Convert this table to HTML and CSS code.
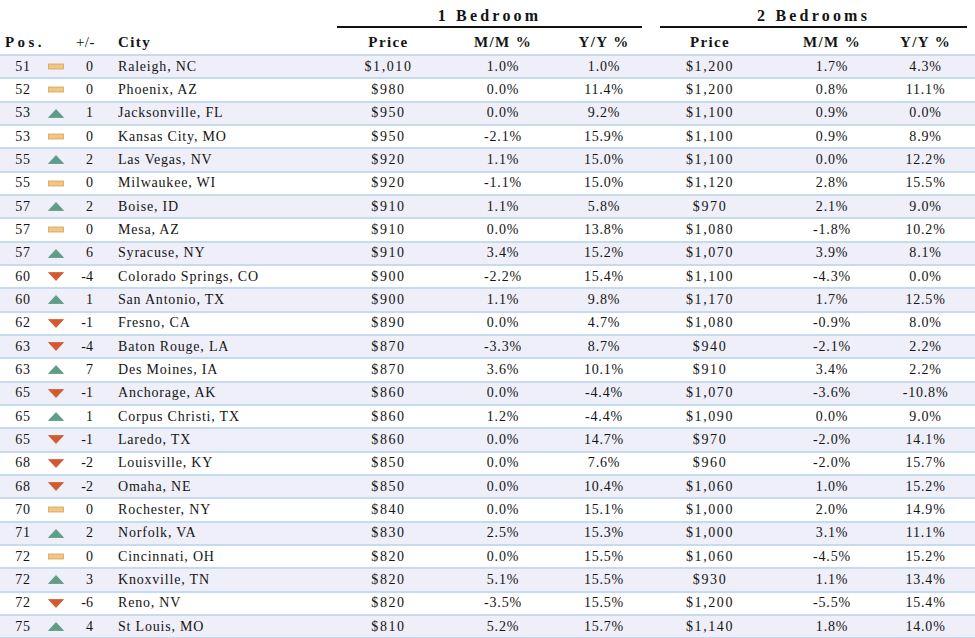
FILE: index.html
```html
<!DOCTYPE html>
<html>
<head>
<meta charset="utf-8">
<title>Rent ranking</title>
<link rel="stylesheet" href="styles.css">
</head>
<body>
<svg class="defs" width="0" height="0">
  <symbol id="up" viewBox="0 0 16 9"><polygon points="0.5,8.5 8,0.5 15.5,8.5" fill="#5c9e88" stroke="#4b8a74" stroke-width="0.6"/></symbol>
  <symbol id="down" viewBox="0 0 16 9"><polygon points="0.5,0.5 15.5,0.5 8,8.5" fill="#d6582f" stroke="#c04a25" stroke-width="0.6"/></symbol>
  <symbol id="flat" viewBox="0 0 16 9"><rect x="0.5" y="2" width="15" height="5" fill="#f1c582" stroke="#d7a35e" stroke-width="0.8"/></symbol>
</svg>
<table class="rank">
  <colgroup>
    <col class="c-pos"><col class="c-ic"><col class="c-chg"><col class="c-city">
    <col class="c-p1"><col class="c-m1"><col class="c-y1"><col class="c-gap">
    <col class="c-p2"><col class="c-m2"><col class="c-y2">
  </colgroup>
  <thead>
    <tr class="group">
      <th colspan="4"></th>
      <th colspan="3"><div class="gtitle">1 Bedroom</div></th>
      <th></th>
      <th colspan="3"><div class="gtitle g2">2 Bedrooms</div></th>
    </tr>
    <tr class="cols">
      <th class="pos">Pos.</th>
      <th></th>
      <th class="chg">+/-</th>
      <th class="city">City</th>
      <th class="num">Price</th>
      <th class="num">M/M %</th>
      <th class="num">Y/Y %</th>
      <th></th>
      <th class="num">Price</th>
      <th class="num m2">M/M %</th>
      <th class="num y2">Y/Y %</th>
    </tr>
  </thead>
  <tbody>
    <tr><td class="pos">51</td><td class="ic"><svg><use href="#flat"/></svg></td><td class="chg">0</td><td class="city">Raleigh, NC</td><td class="num pr">$1,010</td><td class="num">1.0%</td><td class="num">1.0%</td><td></td><td class="num pr">$1,200</td><td class="num m2">1.7%</td><td class="num y2">4.3%</td></tr>
    <tr><td class="pos">52</td><td class="ic"><svg><use href="#flat"/></svg></td><td class="chg">0</td><td class="city">Phoenix, AZ</td><td class="num pr">$980</td><td class="num">0.0%</td><td class="num">11.4%</td><td></td><td class="num pr">$1,200</td><td class="num m2">0.8%</td><td class="num y2">11.1%</td></tr>
    <tr><td class="pos">53</td><td class="ic"><svg><use href="#up"/></svg></td><td class="chg">1</td><td class="city">Jacksonville, FL</td><td class="num pr">$950</td><td class="num">0.0%</td><td class="num">9.2%</td><td></td><td class="num pr">$1,100</td><td class="num m2">0.9%</td><td class="num y2">0.0%</td></tr>
    <tr><td class="pos">53</td><td class="ic"><svg><use href="#flat"/></svg></td><td class="chg">0</td><td class="city">Kansas City, MO</td><td class="num pr">$950</td><td class="num">-2.1%</td><td class="num">15.9%</td><td></td><td class="num pr">$1,100</td><td class="num m2">0.9%</td><td class="num y2">8.9%</td></tr>
    <tr><td class="pos">55</td><td class="ic"><svg><use href="#up"/></svg></td><td class="chg">2</td><td class="city">Las Vegas, NV</td><td class="num pr">$920</td><td class="num">1.1%</td><td class="num">15.0%</td><td></td><td class="num pr">$1,100</td><td class="num m2">0.0%</td><td class="num y2">12.2%</td></tr>
    <tr><td class="pos">55</td><td class="ic"><svg><use href="#flat"/></svg></td><td class="chg">0</td><td class="city">Milwaukee, WI</td><td class="num pr">$920</td><td class="num">-1.1%</td><td class="num">15.0%</td><td></td><td class="num pr">$1,120</td><td class="num m2">2.8%</td><td class="num y2">15.5%</td></tr>
    <tr><td class="pos">57</td><td class="ic"><svg><use href="#up"/></svg></td><td class="chg">2</td><td class="city">Boise, ID</td><td class="num pr">$910</td><td class="num">1.1%</td><td class="num">5.8%</td><td></td><td class="num pr">$970</td><td class="num m2">2.1%</td><td class="num y2">9.0%</td></tr>
    <tr><td class="pos">57</td><td class="ic"><svg><use href="#flat"/></svg></td><td class="chg">0</td><td class="city">Mesa, AZ</td><td class="num pr">$910</td><td class="num">0.0%</td><td class="num">13.8%</td><td></td><td class="num pr">$1,080</td><td class="num m2">-1.8%</td><td class="num y2">10.2%</td></tr>
    <tr><td class="pos">57</td><td class="ic"><svg><use href="#up"/></svg></td><td class="chg">6</td><td class="city">Syracuse, NY</td><td class="num pr">$910</td><td class="num">3.4%</td><td class="num">15.2%</td><td></td><td class="num pr">$1,070</td><td class="num m2">3.9%</td><td class="num y2">8.1%</td></tr>
    <tr><td class="pos">60</td><td class="ic"><svg><use href="#down"/></svg></td><td class="chg">-4</td><td class="city">Colorado Springs, CO</td><td class="num pr">$900</td><td class="num">-2.2%</td><td class="num">15.4%</td><td></td><td class="num pr">$1,100</td><td class="num m2">-4.3%</td><td class="num y2">0.0%</td></tr>
    <tr><td class="pos">60</td><td class="ic"><svg><use href="#up"/></svg></td><td class="chg">1</td><td class="city">San Antonio, TX</td><td class="num pr">$900</td><td class="num">1.1%</td><td class="num">9.8%</td><td></td><td class="num pr">$1,170</td><td class="num m2">1.7%</td><td class="num y2">12.5%</td></tr>
    <tr><td class="pos">62</td><td class="ic"><svg><use href="#down"/></svg></td><td class="chg">-1</td><td class="city">Fresno, CA</td><td class="num pr">$890</td><td class="num">0.0%</td><td class="num">4.7%</td><td></td><td class="num pr">$1,080</td><td class="num m2">-0.9%</td><td class="num y2">8.0%</td></tr>
    <tr><td class="pos">63</td><td class="ic"><svg><use href="#down"/></svg></td><td class="chg">-4</td><td class="city">Baton Rouge, LA</td><td class="num pr">$870</td><td class="num">-3.3%</td><td class="num">8.7%</td><td></td><td class="num pr">$940</td><td class="num m2">-2.1%</td><td class="num y2">2.2%</td></tr>
    <tr><td class="pos">63</td><td class="ic"><svg><use href="#up"/></svg></td><td class="chg">7</td><td class="city">Des Moines, IA</td><td class="num pr">$870</td><td class="num">3.6%</td><td class="num">10.1%</td><td></td><td class="num pr">$910</td><td class="num m2">3.4%</td><td class="num y2">2.2%</td></tr>
    <tr><td class="pos">65</td><td class="ic"><svg><use href="#down"/></svg></td><td class="chg">-1</td><td class="city">Anchorage, AK</td><td class="num pr">$860</td><td class="num">0.0%</td><td class="num">-4.4%</td><td></td><td class="num pr">$1,070</td><td class="num m2">-3.6%</td><td class="num y2">-10.8%</td></tr>
    <tr><td class="pos">65</td><td class="ic"><svg><use href="#up"/></svg></td><td class="chg">1</td><td class="city">Corpus Christi, TX</td><td class="num pr">$860</td><td class="num">1.2%</td><td class="num">-4.4%</td><td></td><td class="num pr">$1,090</td><td class="num m2">0.0%</td><td class="num y2">9.0%</td></tr>
    <tr><td class="pos">65</td><td class="ic"><svg><use href="#down"/></svg></td><td class="chg">-1</td><td class="city">Laredo, TX</td><td class="num pr">$860</td><td class="num">0.0%</td><td class="num">14.7%</td><td></td><td class="num pr">$970</td><td class="num m2">-2.0%</td><td class="num y2">14.1%</td></tr>
    <tr><td class="pos">68</td><td class="ic"><svg><use href="#down"/></svg></td><td class="chg">-2</td><td class="city">Louisville, KY</td><td class="num pr">$850</td><td class="num">0.0%</td><td class="num">7.6%</td><td></td><td class="num pr">$960</td><td class="num m2">-2.0%</td><td class="num y2">15.7%</td></tr>
    <tr><td class="pos">68</td><td class="ic"><svg><use href="#down"/></svg></td><td class="chg">-2</td><td class="city">Omaha, NE</td><td class="num pr">$850</td><td class="num">0.0%</td><td class="num">10.4%</td><td></td><td class="num pr">$1,060</td><td class="num m2">1.0%</td><td class="num y2">15.2%</td></tr>
    <tr><td class="pos">70</td><td class="ic"><svg><use href="#flat"/></svg></td><td class="chg">0</td><td class="city">Rochester, NY</td><td class="num pr">$840</td><td class="num">0.0%</td><td class="num">15.1%</td><td></td><td class="num pr">$1,000</td><td class="num m2">2.0%</td><td class="num y2">14.9%</td></tr>
    <tr><td class="pos">71</td><td class="ic"><svg><use href="#up"/></svg></td><td class="chg">2</td><td class="city">Norfolk, VA</td><td class="num pr">$830</td><td class="num">2.5%</td><td class="num">15.3%</td><td></td><td class="num pr">$1,000</td><td class="num m2">3.1%</td><td class="num y2">11.1%</td></tr>
    <tr><td class="pos">72</td><td class="ic"><svg><use href="#flat"/></svg></td><td class="chg">0</td><td class="city">Cincinnati, OH</td><td class="num pr">$820</td><td class="num">0.0%</td><td class="num">15.5%</td><td></td><td class="num pr">$1,060</td><td class="num m2">-4.5%</td><td class="num y2">15.2%</td></tr>
    <tr><td class="pos">72</td><td class="ic"><svg><use href="#up"/></svg></td><td class="chg">3</td><td class="city">Knoxville, TN</td><td class="num pr">$820</td><td class="num">5.1%</td><td class="num">15.5%</td><td></td><td class="num pr">$930</td><td class="num m2">1.1%</td><td class="num y2">13.4%</td></tr>
    <tr><td class="pos">72</td><td class="ic"><svg><use href="#down"/></svg></td><td class="chg">-6</td><td class="city">Reno, NV</td><td class="num pr">$820</td><td class="num">-3.5%</td><td class="num">15.5%</td><td></td><td class="num pr">$1,200</td><td class="num m2">-5.5%</td><td class="num y2">15.4%</td></tr>
    <tr><td class="pos">75</td><td class="ic"><svg><use href="#up"/></svg></td><td class="chg">4</td><td class="city">St Louis, MO</td><td class="num pr">$810</td><td class="num">5.2%</td><td class="num">15.7%</td><td></td><td class="num pr">$1,140</td><td class="num m2">1.8%</td><td class="num y2">14.0%</td></tr>
  </tbody>
</table>
</body>
</html>
```
FILE: styles.css
```css
body{margin:0;padding:0;background:#fff;font-family:"Liberation Serif","Times New Roman",serif;color:#141414;}
.defs{position:absolute;width:0;height:0;overflow:hidden;}

.rank{width:975px;table-layout:fixed;border-collapse:separate;border-spacing:0;font-size:14px;letter-spacing:0.8px;}
.rank th,.rank td{padding:0;white-space:nowrap;}

.c-pos{width:46px;}
.c-ic{width:20px;}
.c-chg{width:34px;}
.c-city{width:237px;}
.c-p1{width:103px;}
.c-m1{width:126px;}
.c-y1{width:76px;}
.c-gap{width:18px;}
.c-p2{width:100px;}
.c-m2{width:130px;}
.c-y2{width:85px;}

/* group titles */
.rank .group th{height:31px;vertical-align:top;}
.gtitle{font-size:16px;font-weight:bold;letter-spacing:3.2px;text-align:center;line-height:18px;padding-top:7px;padding-bottom:1px;border-bottom:2px solid #111;}
.gtitle.g2{margin-right:8px;}

/* column titles */
.rank .cols th{height:23px;font-weight:bold;font-size:15px;letter-spacing:1.4px;border-bottom:2px solid #c6dbf0;vertical-align:middle;}
.rank .cols .pos{text-align:left;padding-left:5px;letter-spacing:3.4px;}
.rank .cols .chg{text-align:right;padding-right:5px;letter-spacing:0.5px;font-weight:normal;}
.rank .cols .city{text-align:left;padding-left:18px;}

/* body rows */
.rank tbody tr{height:23.33px;}
.rank tbody td{border-bottom:2px solid #c6dbf0;vertical-align:middle;line-height:18px;}
.rank tbody tr:nth-child(odd) td{background:#efeff9;}

.rank .pos{text-align:center;}
.rank .ic{text-align:center;}
.ic svg{width:16px;height:9px;display:block;margin:0 auto;}
.rank .chg{text-align:right;padding-right:7px;letter-spacing:0;}
.rank .city{text-align:left;padding-left:18px;}
.rank .num{text-align:center;}
.rank .pr{letter-spacing:1.6px;}
.rank .m2{padding-left:14px;}
.rank .y2{padding-right:14px;}
```
